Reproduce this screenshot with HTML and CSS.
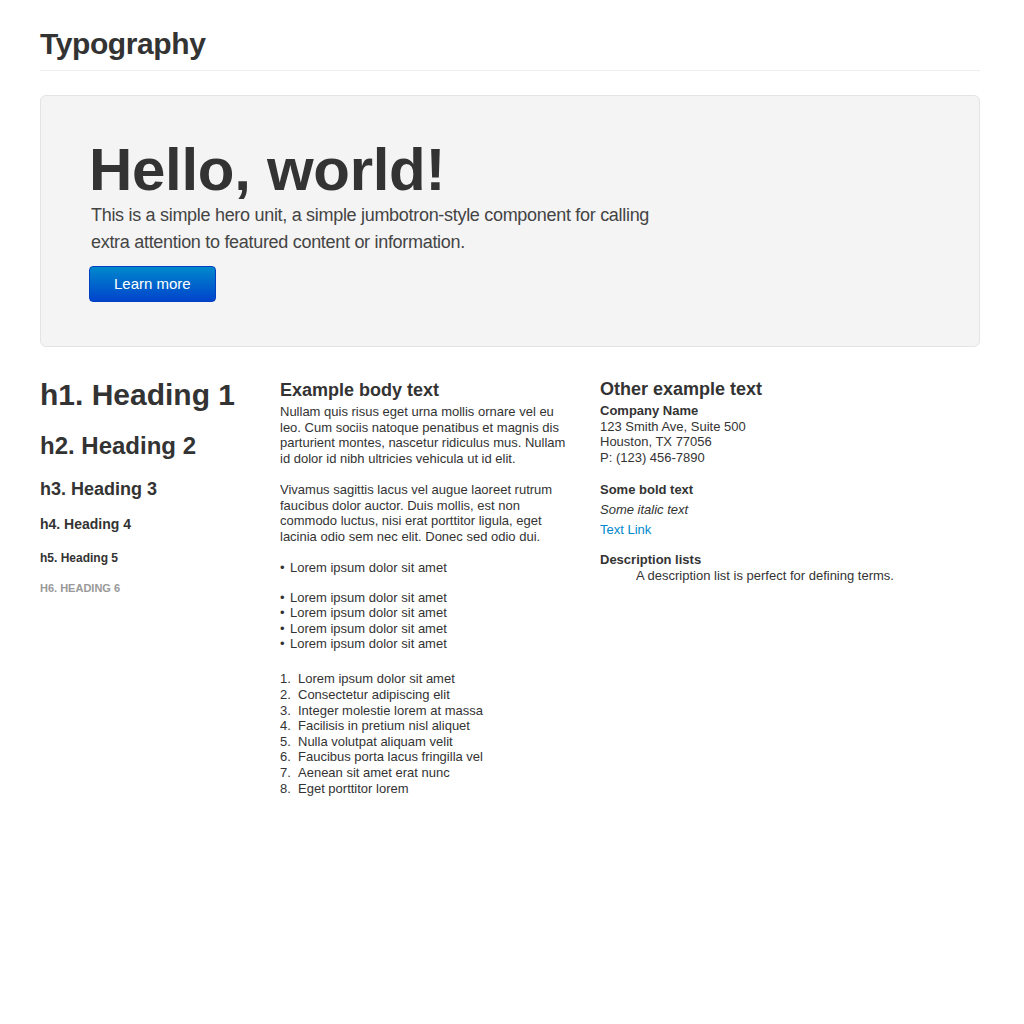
FILE: index.html
```html
<!DOCTYPE html>
<html lang="en">
<head>
<meta charset="utf-8">
<title>Typography</title>
<link rel="stylesheet" href="styles.css">
</head>
<body>
<div class="container">
  <div class="page-header">
    <h1>Typography</h1>
  </div>

  <div class="hero-unit">
    <h1>Hello, world!</h1>
    <p>This is a simple hero unit, a simple jumbotron-style component for calling extra attention to featured content or information.</p>
    <a class="btn-primary" href="#">Learn more</a>
  </div>

  <div class="row">
    <div class="col-headings">
      <h1>h1. Heading 1</h1>
      <h2>h2. Heading 2</h2>
      <h3>h3. Heading 3</h3>
      <h4>h4. Heading 4</h4>
      <h5>h5. Heading 5</h5>
      <h6>h6. Heading 6</h6>
    </div>

    <div class="col-body">
      <h3>Example body text</h3>
      <p>Nullam quis risus eget urna mollis ornare vel eu leo. Cum sociis natoque penatibus et magnis dis parturient montes, nascetur ridiculus mus. Nullam id dolor id nibh ultricies vehicula ut id elit.</p>
      <p>Vivamus sagittis lacus vel augue laoreet rutrum faucibus dolor auctor. Duis mollis, est non commodo luctus, nisi erat porttitor ligula, eget lacinia odio sem nec elit. Donec sed odio dui.</p>
      <ul class="bullets single">
        <li>Lorem ipsum dolor sit amet</li>
      </ul>
      <ul class="bullets multi">
        <li>Lorem ipsum dolor sit amet</li>
        <li>Lorem ipsum dolor sit amet</li>
        <li>Lorem ipsum dolor sit amet</li>
        <li>Lorem ipsum dolor sit amet</li>
      </ul>
      <ol class="numbers">
        <li>Lorem ipsum dolor sit amet</li>
        <li>Consectetur adipiscing elit</li>
        <li>Integer molestie lorem at massa</li>
        <li>Facilisis in pretium nisl aliquet</li>
        <li>Nulla volutpat aliquam velit</li>
        <li>Faucibus porta lacus fringilla vel</li>
        <li>Aenean sit amet erat nunc</li>
        <li>Eget porttitor lorem</li>
      </ol>
    </div>

    <div class="col-other">
      <h3>Other example text</h3>
      <address>
        <strong>Company Name</strong><br>
        123 Smith Ave, Suite 500<br>
        Houston, TX 77056<br>
        P: (123) 456-7890
      </address>
      <p class="line"><strong>Some bold text</strong></p>
      <p class="line"><em>Some italic text</em></p>
      <p class="line last"><a href="#">Text Link</a></p>
      <dl>
        <dt>Description lists</dt>
        <dd>A description list is perfect for defining terms.</dd>
      </dl>
    </div>
  </div>
</div>
</body>
</html>
```

FILE: styles.css
```css
* { box-sizing: border-box; }

html, body {
  margin: 0;
  padding: 0;
  background: #ffffff;
}

body {
  font-family: "Liberation Sans", Helvetica, Arial, sans-serif;
  font-size: 13px;
  line-height: 15.6px;
  color: #333333;
}

h1, h2, h3, h4, h5, h6, p, ul, ol, dl, dd, address {
  margin: 0;
  padding: 0;
}

.container {
  width: 940px;
  margin-left: 40px;
}

.page-header {
  padding-top: 26px;
  padding-bottom: 8px;
  border-bottom: 1px solid #eeeeee;
}

.page-header h1 {
  font-size: 30px;
  line-height: 36px;
  font-weight: bold;
  letter-spacing: -0.4px;
}

.hero-unit {
  margin-top: 24px;
  padding: 44px 48px 44px;
  background: #f4f4f4;
  border: 1px solid #e4e4e4;
  border-radius: 6px;
}

.hero-unit h1 {
  font-size: 60px;
  line-height: 60px;
  font-weight: bold;
  letter-spacing: -0.3px;
  margin-bottom: 2px;
}

.hero-unit p {
  font-size: 18px;
  line-height: 27px;
  font-weight: 300;
  letter-spacing: -0.3px;
  color: #444444;
  max-width: 600px;
  padding-left: 2px;
  margin-bottom: 10px;
}

.btn-primary {
  display: inline-block;
  height: 36px;
  padding: 0 24px;
  font-size: 15px;
  line-height: 34px;
  color: #ffffff;
  text-decoration: none;
  background: linear-gradient(to bottom, #0088cc, #0044cc);
  border: 1px solid #0040c0;
  border-radius: 4px;
}

.row {
  display: flex;
  gap: 20px;
  margin-top: 30px;
}

.col-headings { width: 220px; }
.col-body { width: 300px; }
.col-other { width: 300px; margin-top: -1px; }

.col-headings h1 { font-size: 30px; line-height: 40px; margin-top: -2px; }
.col-headings h2 { font-size: 24px; line-height: 40px; margin-top: 11px; }
.col-headings h3 { font-size: 18px; line-height: 27px; margin-top: 10px; }
.col-headings h4 { font-size: 14px; line-height: 20px; margin-top: 11px; }
.col-headings h5 { font-size: 12px; line-height: 20px; margin-top: 14px; }
.col-headings h6 {
  font-size: 11px;
  line-height: 20px;
  margin-top: 10px;
  text-transform: uppercase;
  color: #999999;
}

.col-body h3,
.col-other h3 {
  font-size: 18px;
  line-height: 27px;
}

.col-body p {
  max-width: 292px;
  margin-bottom: 15.6px;
}

.bullets { list-style: none; }
.bullets li::before {
  content: "\2022";
  display: inline-block;
  width: 10px;
}
.bullets.single { margin-top: 1px; margin-bottom: 14px; }
.bullets.multi { margin-bottom: 19.5px; }

.numbers {
  list-style: none;
  counter-reset: item;
}
.numbers li { counter-increment: item; }
.numbers li::before {
  content: counter(item) ".";
  display: inline-block;
  width: 18px;
}

address {
  font-style: normal;
  margin-bottom: 17px;
}

.line { margin-bottom: 4.4px; }
.line.last { margin-bottom: 14px; }

a { color: #0088cc; text-decoration: none; }

dt { font-weight: bold; }
dd { margin-left: 36px; }
```
